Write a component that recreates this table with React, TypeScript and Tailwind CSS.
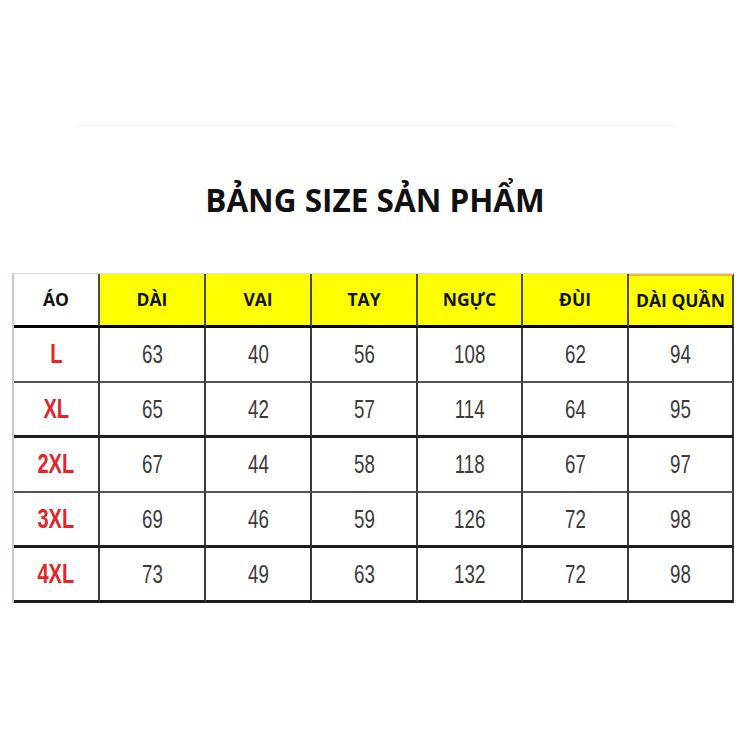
import React from "react"

const headers = ["ÁO", "DÀI", "VAI", "TAY", "NGỰC", "ĐÙI", "DÀI QUẦN"]

const rows: Array<{ size: string; values: number[] }> = [
	{ size: "L", values: [63, 40, 56, 108, 62, 94] },
	{ size: "XL", values: [65, 42, 57, 114, 64, 95] },
	{ size: "2XL", values: [67, 44, 58, 118, 67, 97] },
	{ size: "3XL", values: [69, 46, 59, 126, 72, 98] },
	{ size: "4XL", values: [73, 49, 63, 132, 72, 98] },
]

// thicker black rule under these rows, grey elsewhere
const darkRule = [false, true, false, true, true]

export default function App() {
	return (
		<div className="flex h-[750px] w-[750px] flex-col bg-white">
			<div className="mx-[75px] mt-[125px] h-px bg-[#f3f3f1]" />

			<h1 className="mt-[55px] text-center font-['Open_Sans',sans-serif] text-[31.5px] font-bold leading-[38px] text-[#111]">
				BẢNG SIZE SẢN PHẨM
			</h1>

			<div className="ml-[12px] mt-[54px] w-[722px] border-l-2 border-t border-l-[#bccbdd] border-t-[#dcdcdc]">
				<div className="grid grid-cols-[86px_106px_106px_106px_105px_106px_105px]">
					{headers.map((h, i) => (
						<div
							key={h}
							className={
								"flex h-[54px] items-center justify-center border-b-[3px] border-r-2 border-b-black border-r-[#4a4a4a] font-['Open_Sans',sans-serif] text-[17.5px] font-bold text-[#111] " +
								(i === 0
									? "bg-white"
									: i === 6
										? "border-t-2 border-t-[#f5b342] bg-[#ffff00]"
										: "bg-[#ffff00]")
							}
						>
							{h}
						</div>
					))}

					{rows.map((row, r) => (
						<React.Fragment key={row.size}>
							<div
								className={
									"flex h-[55px] items-center justify-center border-r-2 border-r-[#3a3a3a] " +
									(darkRule[r]
										? "border-b-[3px] border-b-[#1c1c1c]"
										: "border-b-2 border-b-[#555]")
								}
							>
								<span className="inline-block scale-x-[0.74] font-['Liberation_Sans',Arial,sans-serif] text-[27px] font-bold text-[#e3242b]">
									{row.size}
								</span>
							</div>
							{row.values.map((v, c) => (
								<div
									key={c}
									className={
										"flex h-[55px] items-center justify-center border-r-2 border-r-[#3a3a3a] " +
										(darkRule[r]
											? "border-b-[3px] border-b-[#1c1c1c]"
											: "border-b-2 border-b-[#555]")
									}
								>
									<span className="inline-block scale-x-[0.72] font-['Liberation_Sans',Arial,sans-serif] text-[26px] text-[#3b3b3b]">
										{v}
									</span>
								</div>
							))}
						</React.Fragment>
					))}
				</div>
			</div>
		</div>
	)
}
